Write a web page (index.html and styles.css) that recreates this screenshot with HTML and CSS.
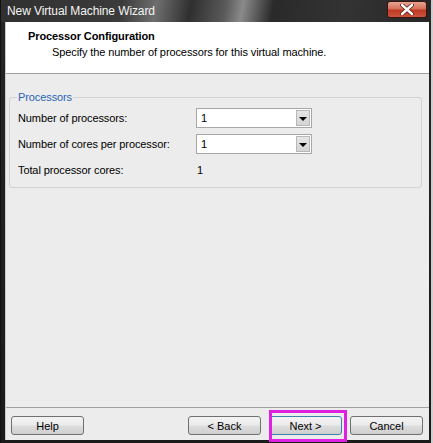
FILE: index.html
```html
<!DOCTYPE html>
<html lang="en">
<head>
    <meta charset="UTF-8">
    <title>New Virtual Machine Wizard</title>
    <link rel="stylesheet" href="styles.css">
</head>
<body>
    <div class="window">
        <div class="titlebar">
            <span class="title">New Virtual Machine Wizard</span>
            <div class="close-btn">
                <svg width="16" height="11" viewBox="0 0 16 11">
                    <path d="M3 1 L13 10 M13 1 L3 10" stroke="#5a1a10" stroke-width="4" stroke-linecap="round"/>
                    <path d="M3 1 L13 10 M13 1 L3 10" stroke="#fff" stroke-width="2.4" stroke-linecap="round"/>
                </svg>
            </div>
        </div>
        <div class="client">
            <div class="header">
                <div class="header-title">Processor Configuration</div>
                <div class="header-sub">Specify the number of processors for this virtual machine.</div>
            </div>
            <div class="content">
                <fieldset class="group">
                    <legend>Processors</legend>
                    <div class="row">
                        <label>Number of processors:</label>
                        <div class="combo"><span>1</span><div class="arrow"></div></div>
                    </div>
                    <div class="row">
                        <label>Number of cores per processor:</label>
                        <div class="combo"><span>1</span><div class="arrow"></div></div>
                    </div>
                    <div class="row total">
                        <label>Total processor cores:</label>
                        <span class="value">1</span>
                    </div>
                </fieldset>
            </div>
            <div class="footer">
                <button class="btn">Help</button>
                <div class="spacer"></div>
                <button class="btn">&lt; Back</button>
                <button class="btn default">Next &gt;</button>
                <button class="btn">Cancel</button>
            </div>
        </div>
    </div>
</body>
</html>
```

FILE: styles.css
```css
html, body {
    margin: 0;
    height: 100%;
}
body {
    font-family: "Liberation Sans", Arial, sans-serif;
    font-size: 11px;
    letter-spacing: -0.1px;
    color: #000;
    background: #1c1c1c;
}
.window {
    height: 443px;
    display: flex;
    flex-direction: column;
    padding: 0 2px 3px 4px;
    box-sizing: border-box;
    background: linear-gradient(180deg, #262626, #1a1a1a);
    border-right: 2px solid #cfcfcf;
    border-left: 1px solid #111;
}
.titlebar {
    height: 22px;
    display: flex;
    align-items: center;
    margin: 0 -2px 0 -4px;
    padding: 0 4px 0 6px;
    background: linear-gradient(100deg, #303030 0%, #3b3b3b 28%, #6e6e6e 36%, #2f2f2f 44%, #5a5a5a 52%, #8a8a8a 56%, #2a2a2a 63%, #333 80%, #262626 100%);
}
.title {
    color: #f4f4f4;
    font-size: 12px;
    flex: 1;
}
.close-btn {
    width: 38px;
    height: 15px;
    margin-top: -3px;
    border: 1px solid #3a1510;
    border-radius: 3px;
    background: linear-gradient(180deg, #e9a493 0%, #d5705c 45%, #bf3a22 55%, #cc5540 100%);
    display: flex;
    align-items: center;
    justify-content: center;
}
.client {
    flex: 1;
    display: flex;
    flex-direction: column;
    background: #ececec;
    border-left: 1px solid #c9c9c9;
}
.header {
    height: 52px;
    background: #fff;
    border-bottom: 1px solid #a0a0a0;
    padding: 8px 0 0 22px;
    box-sizing: border-box;
}
.header-title {
    font-weight: bold;
    font-size: 11px;
}
.header-sub {
    margin: 4px 0 0 24px;
}
.content {
    flex: 1;
    padding: 17px 7px 0 3px;
}
.group {
    margin: 0;
    padding: 5px 8px 7px 8px;
    border: 1px solid #d2d2d2;
    border-radius: 3px;
}
.group legend {
    padding: 0 1px;
    margin-left: -1px;
    color: #2a64b8;
}
.row {
    display: flex;
    align-items: center;
    height: 20px;
    margin-bottom: 6px;
}
.row label {
    width: 178px;
}
.row.total {
    margin-bottom: 0;
    margin-top: 2px;
}
.value {
    margin-left: 1px;
}
.combo {
    width: 114px;
    height: 18px;
    border: 1px solid #a7a7a7;
    background: #fff;
    display: flex;
    align-items: center;
    justify-content: space-between;
}
.combo span {
    padding-left: 4px;
}
.arrow {
    width: 14px;
    height: 16px;
    margin-right: 1px;
    background: linear-gradient(180deg, #e6e6e6, #d4d4d4);
    border: 1px solid #b8b8b8;
    box-sizing: border-box;
    display: flex;
    align-items: center;
    justify-content: center;
}
.arrow::after {
    content: "";
    border-left: 4px solid transparent;
    border-right: 4px solid transparent;
    border-top: 4px solid #000;
    margin-top: 1px;
}
.footer {
    height: 33px;
    border-top: 1px solid #a0a0a0;
    display: flex;
    align-items: flex-start;
    padding: 8px 6px 0 5px;
    gap: 8px;
    box-sizing: border-box;
}
.spacer {
    flex: 1;
}
.btn {
    width: 73px;
    height: 19px;
    font-family: "Liberation Sans", Arial, sans-serif;
    font-size: 11px;
    padding: 0;
    border: 1px solid #707070;
    border-radius: 3px;
    background: linear-gradient(180deg, #f3f3f3 0%, #ebebeb 48%, #dddddd 52%, #cfcfcf 100%);
    color: #000;
}
.btn.default {
    position: relative;
    border-color: #3c7fb1;
}
.btn.default::after {
    content: "";
    position: absolute;
    left: -1px;
    top: -7px;
    width: 72px;
    height: 26px;
    border: 3px solid #e020e0;
}
```
